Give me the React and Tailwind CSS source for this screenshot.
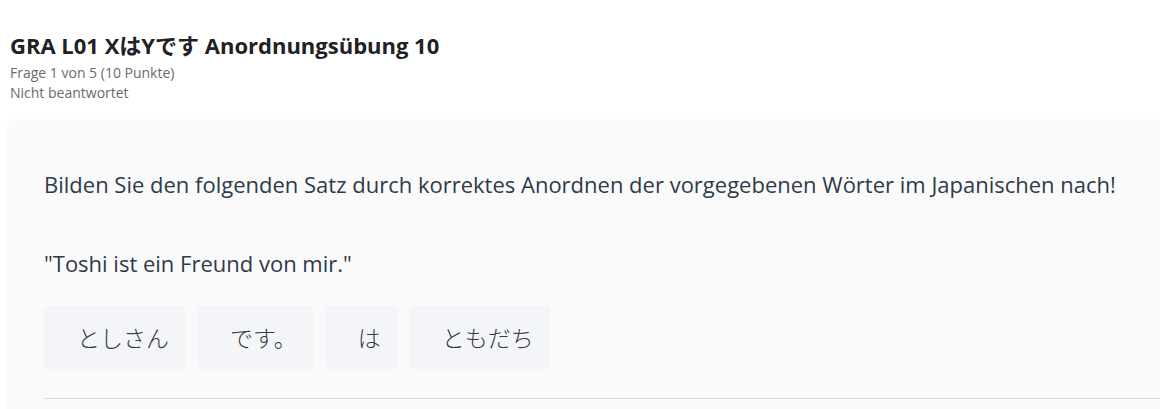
const words = ["としさん", "です。", "は", "ともだち"];

const App = () => {
  return (
    <div
      className="h-[409px] overflow-hidden bg-white pl-[10px] pt-[30px]"
      style={{ fontFamily: '"Open Sans", "Noto Sans CJK JP", sans-serif' }}
    >
      <h1 className="text-[22px] font-bold leading-[30px] text-[#1f2125]">
        GRA L01 XはYです Anordnungsübung 10
      </h1>
      <div className="mt-[3px] text-[14px] leading-[20px] text-[#6b6b6b]">
        <p>Frage 1 von 5 (10 Punkte)</p>
        <p>Nicht beantwortet</p>
      </div>

      <div className="mt-[20px] w-[1180px] rounded-[3px] bg-[#fafafa] pl-[34px] pt-[46px] pb-[40px] shadow-[0_0_6px_rgba(0,0,0,0.08)]">
        <p className="text-[22px] leading-[30px] text-[#2f3a4a]">
          Bilden Sie den folgenden Satz durch korrektes Anordnen der vorgegebenen Wörter im Japanischen nach!
        </p>
        <p className="mt-[49px] text-[22px] leading-[30px] text-[#2f3a4a]">
          "Toshi ist ein Freund von mir."
        </p>

        <div className="mt-[28px] flex gap-[12px]">
          {words.map((w) => (
            <div
              key={w}
              className="flex h-[63px] items-center rounded-[3px] bg-[#f3f5f9] pl-[33px] pr-[16px] text-[23px] font-light text-[#333a46]"
              style={{ fontFamily: '"Noto Sans CJK JP", sans-serif' }}
            >
              {w}
            </div>
          ))}
        </div>

        <div className="mt-[29px] h-px bg-[#dcdcdc]" />
      </div>
    </div>
  );
};

export default App;
